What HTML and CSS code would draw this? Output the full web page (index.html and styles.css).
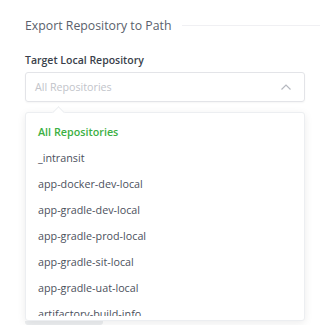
FILE: index.html
```html
<!DOCTYPE html>
<html lang="en">
<head>
    <meta charset="UTF-8">
    <title>Export Repository to Path</title>
    <link rel="stylesheet" href="styles.css">
</head>
<body>
    <div class="panel">
        <div class="section-title">
            <span>Export Repository to Path</span>
            <div class="rule"></div>
        </div>

        <div class="field">
            <label class="field-label">Target Local Repository</label>
            <div class="select">
                <span class="placeholder">All Repositories</span>
                <svg class="chevron" width="12" height="8" viewBox="0 0 12 8">
                    <path d="M1.5 6.5 L6 2 L10.5 6.5" fill="none" stroke="#b5b8bf" stroke-width="1.2"/>
                </svg>
            </div>

            <div class="dropdown">
                <ul class="options">
                    <li class="selected">All Repositories</li>
                    <li>_intransit</li>
                    <li>app-docker-dev-local</li>
                    <li>app-gradle-dev-local</li>
                    <li>app-gradle-prod-local</li>
                    <li>app-gradle-sit-local</li>
                    <li>app-gradle-uat-local</li>
                    <li>artifactory-build-info</li>
                </ul>
            </div>
            <div class="scroll-bar"></div>
        </div>
    </div>
</body>
</html>
```

FILE: styles.css
```css
body {
    margin: 0;
    background: #ffffff;
    font-family: "Open Sans", "DejaVu Sans", sans-serif;
}

.panel {
    padding: 15px 0 0 25px;
}

.section-title {
    display: flex;
    align-items: center;
    gap: 11px;
    font-size: 12.3px;
    color: #5a5f6b;
    height: 20px;
}

.section-title .rule {
    flex: 1;
    height: 1px;
    background: #f0f0f3;
}

.field {
    margin-top: 17px;
    width: 280px;
}

.field-label {
    display: block;
    font-size: 10.5px;
    font-weight: 600;
    color: #3a3f4b;
    height: 17px;
    line-height: 17px;
    margin-bottom: 3px;
}

.select {
    box-sizing: border-box;
    height: 30px;
    border: 1px solid #e3e4e8;
    border-radius: 3px;
    display: flex;
    align-items: center;
    justify-content: space-between;
    padding: 0 12px 0 9px;
    box-shadow: 0 1px 2px rgba(0, 0, 0, 0.04);
}

.placeholder {
    font-size: 10.7px;
    color: #c2c4ca;
}

.dropdown {
    position: relative;
    margin-top: 10px;
    box-sizing: border-box;
    height: 209px;
    padding-bottom: 4px;
    border: 1px solid #eceef1;
    border-radius: 3px;
    background: #fff;
    box-shadow: 0 2px 8px rgba(0, 0, 0, 0.08);
}

/* little notch pointing at the select */
.dropdown::before {
    content: "";
    position: absolute;
    top: -5px;
    left: 28px;
    width: 8px;
    height: 8px;
    background: #fff;
    border-left: 1px solid #eceef1;
    border-top: 1px solid #eceef1;
    transform: rotate(45deg);
}

.options {
    list-style: none;
    margin: 0;
    padding: 6px 0 0 0;
    height: 100%;
    box-sizing: border-box;
    overflow: hidden;
}

.options li {
    height: 26px;
    line-height: 26px;
    padding-left: 12px;
    font-size: 10.75px;
    color: #4b505c;
}

.options li.selected {
    color: #3cb043;
    font-weight: 600;
}

.scroll-bar {
    width: 78px;
    height: 4px;
    background: #eceef0;
    border-radius: 0 0 3px 3px;
}
```
